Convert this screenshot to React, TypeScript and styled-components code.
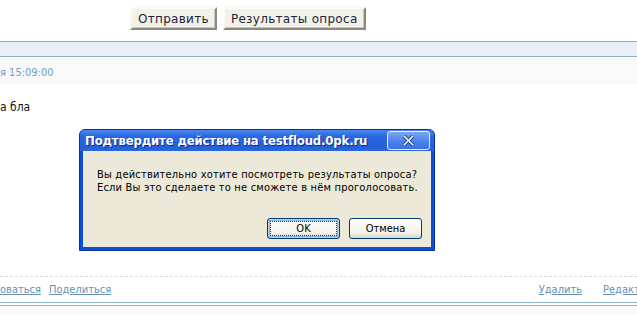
import React from 'react'
import styled, { createGlobalStyle } from 'styled-components'

const GlobalStyle = createGlobalStyle`
  html, body {
    margin: 0;
    padding: 0;
    background: #fff;
  }
  body {
    font-family: Tahoma, "DejaVu Sans Condensed", "Liberation Sans", sans-serif;
    -webkit-font-smoothing: none;
  }
`

const Page = styled.div`
  position: relative;
  width: 637px;
  height: 315px;
  overflow: hidden;
  background: #fff;
`

const FormRow = styled.div`
  display: flex;
  gap: 6px;
  padding: 7px 0 0 130px;
`

const WebButton = styled.button`
  height: 23px;
  padding: 0 6px;
  background: #f4f2e8;
  border: 2px solid;
  border-color: #fbfaf5 #8c8a80 #8c8a80 #fbfaf5;
  box-shadow: inset -1px -1px 0 #c9c6b8;
  font-family: "DejaVu Sans", Verdana, sans-serif;
  font-size: 12px;
  color: #1b2440;
  letter-spacing: 0.3px;
`

const SectionBar = styled.div`
  margin-top: 11px;
  height: 14px;
  background: #e9eff5;
  border-top: 1px solid #8fb4cd;
  border-bottom: 1px solid #8fb4cd;
`

const MetaRow = styled.div`
  height: 27px;
  background: #f9f9f9;
  display: flex;
  align-items: center;
  padding-top: 3px;
  box-sizing: border-box;
  font-size: 11px;
  color: #6e9ec2;
`

const BodyText = styled.div`
  padding-top: 16px;
  font-size: 12px;
  color: #111;
  height: 192px;
  box-sizing: border-box;
  overflow: hidden;
`

const PollLine = styled.div`
  margin: 125px 0 0 130px;
  font-size: 12px;
  color: #3a5f9a;
`

const Dashed = styled.div`
  border-top: 1px dashed #dcdcdc;
`

const LinksRow = styled.div`
  display: flex;
  align-items: center;
  height: 24px;
  font-size: 11px;
  margin-right: -45px;
`

const LinkGroup = styled.div<{ $right?: boolean }>`
  display: flex;
  gap: ${(p) => (p.$right ? '21px' : '8px')};
  margin-left: ${(p) => (p.$right ? 'auto' : '0')};
`

const Link = styled.a`
  color: #6592b4;
  text-decoration: underline;
  white-space: nowrap;
`

const DoubleRule = styled.div`
  margin-top: 1px;
  height: 2px;
  border-top: 1px solid #8fb4cd;
  border-bottom: 1px solid #8fb4cd;
`

const Footer = styled.div`
  height: 40px;
  background: #f9f9f9;
`

const Dialog = styled.div`
  position: absolute;
  left: 79px;
  top: 129px;
  width: 356px;
  height: 122px;
  box-sizing: border-box;
  background: #0d4ed6;
  border: 1px solid #0a2f9e;
  border-radius: 6px 6px 0 0;
  padding: 0 3px 3px;
  display: flex;
  flex-direction: column;
`

const TitleBar = styled.div`
  height: 21px;
  display: flex;
  align-items: center;
  justify-content: space-between;
  background: linear-gradient(#4a89ee 0%, #2a67e0 30%, #2260da 80%, #2c66dc 100%);
  margin: 0 -3px;
  padding: 0 4px 0 5px;
  border-radius: 5px 5px 0 0;
`

const Title = styled.span`
  color: #fff;
  font-family: "DejaVu Sans Condensed", "Liberation Sans", sans-serif;
  font-weight: bold;
  font-size: 13px;
  letter-spacing: -0.15px;
  text-shadow: 1px 1px 0 #0a2c8a;
`

const CloseBtn = styled.div`
  width: 41px;
  height: 17px;
  border: 1px solid #e8eefc;
  border-radius: 3px;
  background: linear-gradient(#7aa6f3, #4a80ea 60%, #3b6fe0);
  display: flex;
  align-items: center;
  justify-content: center;
`

const DialogBody = styled.div`
  flex: 1;
  background: #ece9d8;
  padding: 17px 9px 0 14px;
  display: flex;
  flex-direction: column;
`

const Message = styled.p`
  margin: 0;
  font-size: 11px;
  line-height: 13px;
  letter-spacing: 0.2px;
  color: #000;
`

const ButtonRow = styled.div`
  margin-top: auto;
  margin-bottom: 8px;
  display: flex;
  justify-content: flex-end;
  gap: 9px;
`

const XpButton = styled.button<{ $focus?: boolean }>`
  position: relative;
  width: 73px;
  height: 21px;
  border: 1px solid #003c74;
  border-radius: 3px;
  background: linear-gradient(#ffffff, #f3f2ec 70%, #d9d6c8);
  font-family: Tahoma, "DejaVu Sans Condensed", sans-serif;
  font-size: 11px;
  color: #000;
  padding: 0;
  box-shadow: ${(p) => (p.$focus ? 'inset 0 0 0 1px #b8d0f4, inset 0 0 0 2px #8db2e3' : 'none')};
  &::after {
    content: '';
    display: ${(p) => (p.$focus ? 'block' : 'none')};
    position: absolute;
    inset: 2px;
    border: 1px dotted #333;
  }
`

export default function App() {
  return (
    <Page>
      <GlobalStyle />
      <FormRow>
        <WebButton>Отправить</WebButton>
        <WebButton>Результаты опроса</WebButton>
      </FormRow>
      <SectionBar />
      <MetaRow>я 15:09:00</MetaRow>
      <BodyText>
        а бла
        <PollLine>Голосов: 0</PollLine>
      </BodyText>
      <Dashed />
      <LinksRow>
        <LinkGroup>
          <Link>оваться</Link>
          <Link>Поделиться</Link>
        </LinkGroup>
        <LinkGroup $right>
          <Link>Удалить</Link>
          <Link>Редактировать</Link>
        </LinkGroup>
      </LinksRow>
      <DoubleRule />
      <Footer />

      <Dialog>
        <TitleBar>
          <Title>Подтвердите действие на testfloud.0pk.ru</Title>
          <CloseBtn>
            <svg width="13" height="11" viewBox="0 0 13 11">
              <path d="M2 1 L11 10 M11 1 L2 10" stroke="#1b3f8f" strokeWidth="3.4" />
              <path d="M2 1 L11 10 M11 1 L2 10" stroke="#fff" strokeWidth="1.6" />
            </svg>
          </CloseBtn>
        </TitleBar>
        <DialogBody>
          <Message>Вы действительно хотите посмотреть результаты опроса?</Message>
          <Message>Если Вы это сделаете то не сможете в нём проголосовать.</Message>
          <ButtonRow>
            <XpButton $focus>OK</XpButton>
            <XpButton>Отмена</XpButton>
          </ButtonRow>
        </DialogBody>
      </Dialog>
    </Page>
  )
}
